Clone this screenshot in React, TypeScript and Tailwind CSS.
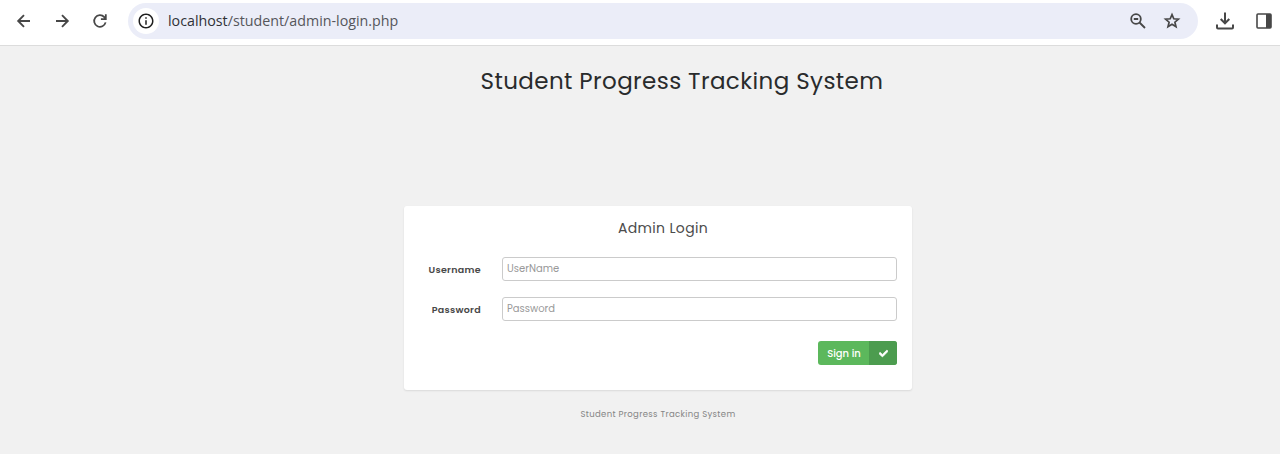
import { MdInfoOutline } from 'react-icons/md';
import { FaCheck } from 'react-icons/fa';

function BrowserBar() {
  return (
    <header className="flex h-[46px] shrink-0 items-start border-b border-[#dcdcdc] bg-white pt-[3px] text-[#474747]">
      <div className="flex h-9 w-32 shrink-0 items-center gap-5 pl-[15px]">
        <svg className="size-[18px] shrink-0" viewBox="0 0 18 18" fill="none" stroke="currentColor" strokeWidth="1.9">
          <path d="M15 9H4M9 3.2L3.2 9L9 14.8" />
        </svg>
        <svg className="size-[18px] shrink-0" viewBox="0 0 18 18" fill="none" stroke="currentColor" strokeWidth="1.9">
          <path d="M3 9H14M9 3.2L14.8 9L9 14.8" />
        </svg>
        <svg className="ml-[1px] size-4 shrink-0" viewBox="0 0 16 16" fill="none" stroke="currentColor" strokeWidth="1.8">
          <path d="M13.6 9.4A5.8 5.8 0 1 1 12.3 4.1L13.6 5.5M13.8 1.2V6.1H8.9" />
        </svg>
      </div>
      <div className="flex h-9 w-[1070px] shrink-0 items-center rounded-full bg-[#ebedf8] pl-[5px] pr-4">
        <div className="flex size-[26px] shrink-0 items-center justify-center rounded-full bg-white text-[#1f1f1f]">
          <MdInfoOutline className="size-[18px]" />
        </div>
        <span className="ml-[9px] whitespace-nowrap font-['Open_Sans','Noto_Sans',sans-serif] text-[14.25px] leading-5 text-[#55565b]">
          <span className="text-[#303136]">localhost</span>/student/admin-login.php
        </span>
        <svg className="ml-auto size-5 shrink-0" viewBox="0 0 20 20" fill="none" stroke="currentColor" strokeWidth="1.8">
          <circle cx="8" cy="8" r="4.8" />
          <path d="M11.5 11.5L17 17M5.8 8H10.2" />
        </svg>
        <svg className="ml-[14px] size-5 shrink-0" viewBox="0 0 20 20" fill="none" stroke="currentColor" strokeWidth="1.7">
          <path d="M10 3.6L11.8 7.8L16.4 8.2L12.9 11.2L14 15.7L10 13.3L6 15.7L7.1 11.2L3.6 8.2L8.2 7.8Z" />
        </svg>
      </div>
      <div className="flex h-9 items-center pl-[18px]">
        <svg className="size-[18px] shrink-0" viewBox="0 0 18 18" fill="none" stroke="currentColor" strokeWidth="2">
          <path d="M9 0.5V11M4.7 7L9 11.3L13.3 7M1 12.5V15.5Q1 16.5 2 16.5H16Q17 16.5 17 15.5V12.5" />
        </svg>
        <svg className="ml-[22px] size-4 shrink-0" viewBox="0 0 16 16">
          <rect x="1" y="1" width="14" height="14" rx="1" fill="none" stroke="currentColor" strokeWidth="1.6" />
          <path d="M10 1H15V15H10Z" fill="currentColor" />
        </svg>
      </div>
    </header>
  );
}

function Field({ label, placeholder, type }: { label: string; placeholder: string; type: string }) {
  return (
    <label className="flex h-6 items-center">
      <span className="w-[77px] shrink-0 whitespace-nowrap pt-0.5 text-right text-[9.5px] font-semibold tracking-[0.3px] text-[#484848]">{label}</span>
      <input
        type={type}
        placeholder={placeholder}
        className="ml-[21px] h-6 w-[395px] rounded-[3px] border border-[#cbcbcb] bg-white px-1 text-[10px] text-[#555] outline-none placeholder:text-[#999]"
      />
    </label>
  );
}

export default function App() {
  return (
    <div className="flex h-[454px] w-[1280px] flex-col overflow-hidden bg-[#f1f1f1] font-['Poppins','Inter',sans-serif]">
      <BrowserBar />
      <main className="flex flex-1 flex-col">
        <h1 className="ml-[480.5px] mt-[17px] h-9 whitespace-nowrap text-[23px] leading-9 tracking-[0.4px] text-[#292b2c]">
          Student Progress Tracking System
        </h1>
        <section className="ml-[404px] mt-[107px] flex h-[184px] w-[508px] flex-col rounded-[3px] bg-white pr-[15px] shadow-[0_1px_2px_rgba(0,0,0,0.1)]">
          <h2 className="ml-[25px] mt-3 text-center text-[14px] leading-5 tracking-[0.35px] text-[#4c4c4c]">Admin Login</h2>
          <form className="mt-[19px] flex flex-col gap-4">
            <Field label="Username" placeholder="UserName" type="text" />
            <Field label="Password" placeholder="Password" type="password" />
            <button type="button" className="mt-[4px] flex h-6 w-[79px] self-end overflow-hidden rounded-[3px] bg-[#5cb85c] text-[10px] font-medium text-white">
              <span className="flex h-full w-[51px] items-center justify-center whitespace-nowrap pl-px">Sign in</span>
              <span className="flex h-full w-7 items-center justify-center bg-[#4c9c4f]">
                <FaCheck className="size-[9px]" stroke="currentColor" strokeWidth="40" />
              </span>
            </button>
          </form>
        </section>
        <footer className="ml-[404px] mt-[16px] w-[508px] whitespace-nowrap text-center text-[8.5px] leading-4 tracking-[0.34px] text-[#858585]">Student Progress Tracking System</footer>
      </main>
    </div>
  );
}
